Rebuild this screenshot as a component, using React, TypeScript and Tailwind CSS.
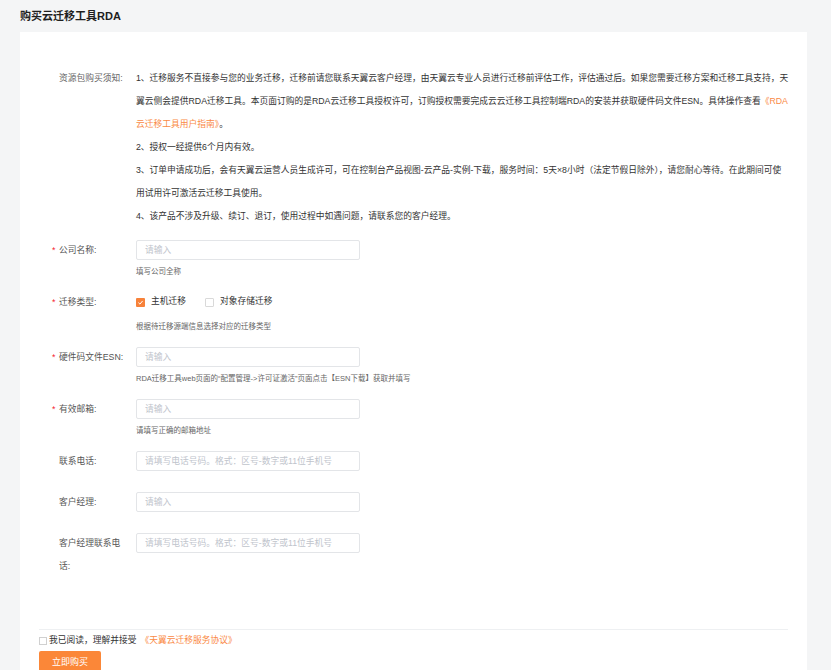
import React from "react";

const FONT = {
  fontFamily: '"Liberation Sans", "Noto Sans CJK SC", sans-serif',
};

function Field({
  label,
  required,
  placeholder,
  help,
}: {
  label: string;
  required?: boolean;
  placeholder: string;
  help?: string;
}) {
  return (
    <div className={help ? "mb-[14px]" : "mb-[21px]"}>
      <div className="flex items-start">
        <div className="relative w-[77px] shrink-0 text-[8.75px] leading-[20px] text-[#555]">
          {required && (
            <span className="absolute left-[-7px] top-0 text-[#f5222d]">*</span>
          )}
          {label}
        </div>
        <input
          readOnly
          placeholder={placeholder}
          className="h-[20px] w-[224px] rounded-[2px] border border-[#e3e5e8] bg-white px-[8px] text-[8.75px] outline-none placeholder:text-[#c0c4cc]"
        />
      </div>
      {help && (
        <div className="ml-[77px] mt-[6px] text-[7.5px] leading-[12px] text-[#666]">
          {help}
        </div>
      )}
    </div>
  );
}

function Check({ checked }: { checked?: boolean }) {
  return checked ? (
    <span className="flex h-[9px] w-[9px] shrink-0 items-center justify-center rounded-[1px] bg-[#f7823a]">
      <svg viewBox="0 0 10 10" className="h-[7px] w-[7px]">
        <path d="M2 5.2 L4.2 7.3 L8 2.8" fill="none" stroke="#fff" strokeWidth="1.4" />
      </svg>
    </span>
  ) : (
    <span className="block h-[9px] w-[9px] shrink-0 rounded-[1px] border border-[#d9d9d9] bg-white" />
  );
}

export default function App() {
  return (
    <div className="min-h-screen bg-[#f4f5f6]" style={FONT}>
      {/* page title */}
      <header className="flex h-[32px] items-center px-[20px]">
        <h1 className="text-[11px] font-bold text-[#1f1f1f]">购买云迁移工具RDA</h1>
      </header>

      {/* main card */}
      <div className="ml-[20px] mr-[24px] bg-white px-[19px] pb-[20px] pt-[35px]">
        <div className="pl-[20px]">
          {/* purchase notice */}
          <div className="flex text-[8.75px] leading-[23px]">
            <div className="w-[77px] shrink-0 text-[#666]">资源包购买须知:</div>
            <div className="flex-1 whitespace-nowrap text-[#333]">
              <p>
                1、迁移服务不直接参与您的业务迁移，迁移前请您联系天翼云客户经理，由天翼云专业人员进行迁移前评估工作，评估通过后。如果您需要迁移方案和迁移工具支持，天
                <br />
                翼云侧会提供RDA迁移工具。本页面订购的是RDA云迁移工具授权许可，订购授权需要完成云云迁移工具控制端RDA的安装并获取硬件码文件ESN。具体操作查看
                <span className="text-[#fa8a45]">《RDA</span>
                <br />
                <span className="text-[#fa8a45]">云迁移工具用户指南》</span>。
              </p>
              <p>2、授权一经提供6个月内有效。</p>
              <p>
                3、订单申请成功后，会有天翼云运营人员生成许可，可在控制台产品视图-云产品-实例-下载，服务时间：5天×8小时（法定节假日除外），请您耐心等待。在此期间可使
                <br />
                用试用许可激活云迁移工具使用。
              </p>
              <p>4、该产品不涉及升级、续订、退订，使用过程中如遇问题，请联系您的客户经理。</p>
            </div>
          </div>

          {/* form */}
          <div className="mt-[12px]">
            <Field label="公司名称:" required placeholder="请输入" help="填写公司全称" />

            <div className="mb-[14px]">
              <div className="flex items-center">
                <div className="relative w-[77px] shrink-0 text-[8.75px] leading-[20px] text-[#555]">
                  <span className="absolute left-[-7px] top-0 text-[#f5222d]">*</span>
                  迁移类型:
                </div>
                <div className="flex h-[20px] items-center text-[8.75px] text-[#333]">
                  <Check checked />
                  <span className="ml-[6px]">主机迁移</span>
                  <span className="ml-[19px]">
                    <Check />
                  </span>
                  <span className="ml-[6px]">对象存储迁移</span>
                </div>
              </div>
              <div className="ml-[77px] mt-[9px] text-[7.5px] leading-[12px] text-[#666]">
                根据待迁移源端信息选择对应的迁移类型
              </div>
            </div>

            <Field
              label="硬件码文件ESN:"
              required
              placeholder="请输入"
              help="RDA迁移工具web页面的“配置管理->许可证激活”页面点击【ESN下载】获取并填写"
            />
            <Field label="有效邮箱:" required placeholder="请输入" help="请填写正确的邮箱地址" />
            <Field label="联系电话:" placeholder="请填写电话号码。格式：区号-数字或11位手机号" />
            <Field label="客户经理:" placeholder="请输入" />

            <div className="flex items-start">
              <div className="mt-[-1.5px] w-[70px] shrink-0 text-[8.75px] leading-[23px] text-[#555]">
                客户经理联系电话:
              </div>
              <input
                readOnly
                placeholder="请填写电话号码。格式：区号-数字或11位手机号"
                className="ml-[7px] h-[20px] w-[224px] rounded-[2px] border border-[#e3e5e8] bg-white px-[8px] text-[8.75px] outline-none placeholder:text-[#c0c4cc]"
              />
            </div>
          </div>
        </div>

        {/* agreement + submit */}
        <div className="mt-[51px] border-t border-[#eef0f2] pt-[4px]">
          <label className="flex h-[14px] items-center text-[8.75px] text-[#333]">
            <span className="h-[8px] w-[8px] border border-[#d0d0d0] bg-white" />
            <span className="ml-[2px]">我已阅读，理解并接受</span>
            <span className="ml-[4px] text-[#fa8a45]">《天翼云迁移服务协议》</span>
          </label>
          <button className="mt-[3px] flex h-[24px] w-[62px] items-center justify-center rounded-[2px] bg-[#fb8738] text-[9px] text-white">
            立即购买
          </button>
        </div>
      </div>
    </div>
  );
}
